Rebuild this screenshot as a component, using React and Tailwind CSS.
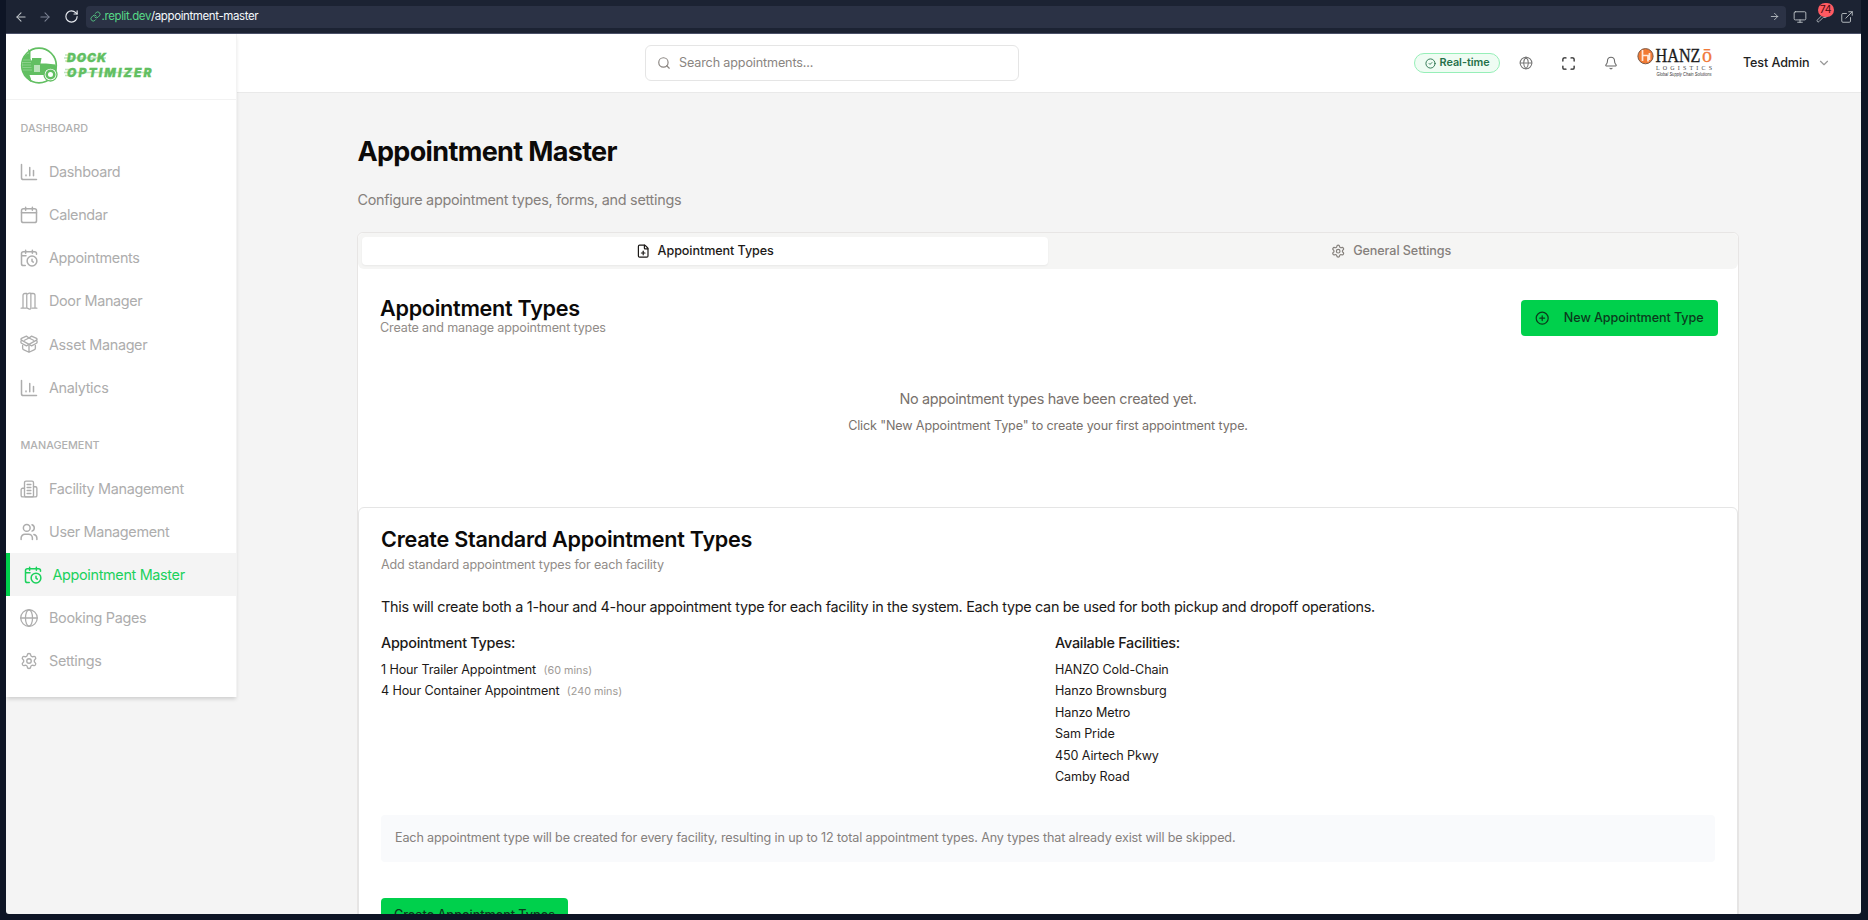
import React from "react";
import {
  ArrowLeft, ArrowRight, RotateCw, Link, Monitor, Wrench, ExternalLink, Search, CircleCheck, Globe, Maximize, Bell,
  ChevronDown, FilePlus, Settings, CirclePlus,
} from "lucide-react";

const stroke = { fill: "none", stroke: "currentColor", strokeWidth: 2, strokeLinecap: "round", strokeLinejoin: "round" };

function Icon({ children, className = "size-[18px]" }) {
  return (
    <svg viewBox="0 0 24 24" className={"shrink-0 " + className} {...stroke}>{children}</svg>
  );
}

const icons = {
  chart: (
    <g><path d="M2 2v17.500a2.500 2.500 0 0 0 2.500 2.500H22" /><path d="M8 17v-1M13 17V6M18 17v-7" /></g>
  ),
  calendar: (
    <g><rect x="2" y="3.500" width="20" height="18.500" rx="2.500" /><path d="M2 9h20M7.500 1.500v4M16.500 1.500v4" /></g>
  ),
  calendarClock: (
    <g><path d="M22 7V6a2.500 2.500 0 0 0-2.500-2.500h-15A2.500 2.500 0 0 0 2 6v13.500A2.500 2.500 0 0 0 4.500 22H7M2 9h6M7.500 1.500v4M16.500 1.500v4" /><circle cx="16" cy="16" r="6.500" /><path d="M16 13.500v2.700l1.700 1.300" /></g>
  ),
  door: (
    <g strokeWidth="1.700"><path d="M1.500 21.500H8M16 21.500h6.500M4 21V4.500A2.500 2.500 0 0 1 6.500 2H9M20 21V4.500A2.500 2.500 0 0 0 17.500 2H14" /><path d="M14.500 21.500V3a1.500 1.500 0 0 0-2-1.500l-2.500 1A1.500 1.500 0 0 0 9 4v17.200l3.500 1.600a1.400 1.400 0 0 0 2-1.300z" /></g>
  ),
  box: (
    <g strokeWidth="1.800"><path d="M12 14v9M3.500 14v3.500c0 1.500 1 2 2.500 2.800l6 2.700 6-2.700c1.500-.8 2.500-1.300 2.500-2.800V14" /><path d="M12 4L8.500 1.500 2 4.500c-1 .7-1 1.700 0 2.300L12 12.500l10-5.700c1-.6 1-1.600 0-2.300l-6.500-3z" /><path d="M2 7c-1 1.500-1 3 0 4l6.500 3.500 3.500-2 3.500 2L22 11c1-1 1-2.500 0-4M6 7l6-3 6 3" /></g>
  ),
  building: (
    <g strokeWidth="1.800"><rect x="6" y="1.500" width="12" height="21" rx="2" /><path d="M6 11H3.500A2 2 0 0 0 1.500 13v7.500a2 2 0 0 0 2 2h17a2 2 0 0 0 2-2V11a2 2 0 0 0-2-2H18M9.500 6h5M9.500 10h5M9.500 14h5M9.500 18h5" /></g>
  ),
  users: (
    <g><circle cx="9" cy="6.500" r="4.500" /><path d="M1.500 22v-2a5 5 0 0 1 5-5h5a5 5 0 0 1 5 5v2M16 2.300a4.500 4.500 0 0 1 0 8.500M22.500 22v-2a5 5 0 0 0-4-4.800" /></g>
  ),
  globe: (
    <g strokeWidth="1.700"><circle cx="12" cy="12" r="11" /><ellipse cx="12" cy="12" rx="4.700" ry="11" /><path d="M1 12h22" /></g>
  ),
};

const dashboardItems = [
  ["chart", "Dashboard"], ["calendar", "Calendar"], ["calendarClock", "Appointments"],
  ["door", "Door Manager"], ["box", "Asset Manager"], ["chart", "Analytics"],
];
const managementItems = [
  ["building", "Facility Management"], ["users", "User Management"], ["calendarClock", "Appointment Master"],
  ["globe", "Booking Pages"], ["settings", "Settings"],
];

function NavItem({ icon, label, active }) {
  return (
    <a className={"flex h-[43.200px] items-center gap-[11px] text-[14.400px] tracking-[-0.330px] " + (active ? "border-l-4 border-[#00d04c] bg-[#f4f4f4] pl-[13.500px] text-[#1bd15c]" : "pl-[14px] text-[#adadad]")}>
      {icon === "settings" ? <Settings className="size-[18px]" strokeWidth={1.800} /> : <Icon>{icons[icon]}</Icon>}
      <span>{label}</span>
    </a>
  );
}

function BrowserBar() {
  return (
    <div className="flex h-[34px] shrink-0 items-center border-b border-[#4a5068] bg-[#1c2333] pl-[7.500px] pr-[7px] text-[#c2c8cc]">
      <ArrowLeft className="size-[14px]" strokeWidth={1.800} />
      <ArrowRight className="ml-[10.500px] size-[14px] text-[#7d8495]" strokeWidth={1.800} />
      <RotateCw className="ml-[12px] size-[15px] text-[#e8ebf0]" strokeWidth={1.800} />
      <div className="ml-[6.500px] flex h-[22px] flex-1 items-center rounded bg-[#2b3245] pl-[4px] text-[11.500px] tracking-[-0.390px]">
        <Link className="size-[11px] text-[#5bd68a]" strokeWidth={1.800} />
        <span className="ml-px text-[#57d987]">.replit.dev</span>
        <span className="text-[#f5f9fc]">/appointment-master</span>
        <ArrowRight className="ml-auto mr-[6px] size-[11px]" strokeWidth={1.800} />
      </div>
      <Monitor className="ml-[7px] size-[14px]" strokeWidth={1.500} />
      <div className="relative ml-[9.500px]">
        <Wrench className="size-[13px]" strokeWidth={1.500} />
        <span className="absolute -top-[7px] left-[1.500px] flex h-[14px] w-[16px] items-center justify-center rounded-full bg-[#ff5a62] text-[10.500px] tracking-[-0.300px] text-[#4a0b10]">74</span>
      </div>
      <ExternalLink className="ml-[11px] size-[14px]" strokeWidth={1.500} />
    </div>
  );
}

function DockLogo() {
  return (
    <svg width="140" height="38" viewBox="0 0 140 38" className="overflow-visible text-[#62bf62]">
      <circle cx="19" cy="18.500" r="17.300" fill="none" stroke="currentColor" strokeWidth="1.700" />
      <path d="M3 11l4-4 2-1L8 2l2.500 2v8L12 14v14H9.500L11 32v3L6 30 2 23z" fill="currentColor" />
      <path d="M12 11h9.500l-1 5.500H26l9.500 1 1 4v2.500h-1.500a6.500 6.500 0 0 0-10.500 4H12z" fill="currentColor" />
      <path d="M14 18h6v7h-6z" fill="#b9e3b9" />
      <path d="M3 13h8M2 15.500h9M2 18h9M2.500 20.500h9M3 23h9" stroke="#a6dba6" strokeWidth=".6" />
      <circle cx="30.500" cy="27.500" r="6.500" fill="#fff" stroke="currentColor" strokeWidth="1.300" />
      <circle cx="30.500" cy="27.500" r="3.800" fill="none" stroke="currentColor" strokeWidth="2.600" />
      <g stroke="currentColor" opacity=".4" strokeWidth="1.300"><path d="M45 8h5M44 11h42M45 14h4M45 22.500h5M44 25.500h86M45 28.500h4" /></g>
      <g fill="currentColor" stroke="currentColor" strokeWidth=".3" fontFamily="Inter, sans-serif" fontWeight="900" fontStyle="italic" fontSize="12">
        <text x="47" y="15.300" textLength="39">DOCK</text>
        <text x="47" y="29.800" textLength="84.500">OPTIMIZER</text>
      </g>
    </svg>
  );
}

function HanzoLogo() {
  return (
    <svg width="78" height="32" viewBox="0 0 78 32" className="overflow-visible">
      <circle cx="8.500" cy="9.200" r="7.600" fill="#f27a33" stroke="#7a5a48" strokeWidth="1" />
      <path d="M5.500 3v11M5.500 8.500h5.500v6M12.500 6v7" stroke="#ffe9dc" strokeWidth="1.700" fill="none" />
      <g fontFamily="Liberation Serif, serif" fill="#1c1c1c">
        <text x="18.500" y="15" fontSize="19" textLength="45" lengthAdjust="spacingAndGlyphs" stroke="#1c1c1c" strokeWidth=".3">HANZ</text>
        <text x="65" y="15" fontSize="20" fill="#f0793a" stroke="#f0793a" strokeWidth=".3">ō</text>
        <text x="19" y="22.800" fontSize="6" textLength="56" fill="#444">LOGISTICS</text>
        <text x="19.500" y="28.800" fontFamily="Liberation Sans, sans-serif" fontStyle="italic" fontSize="4.500" textLength="55" lengthAdjust="spacingAndGlyphs" fill="#333">Global Supply Chain Solutions</text>
      </g>
    </svg>
  );
}

function Sidebar() {
  return (
    <aside className="relative flex h-[663px] w-[231px] shrink-0 flex-col border-r border-[#f3f3f3] bg-white shadow-[0_3px_4px_-1px_rgba(0,0,0,0.16)]">
      <div className="flex h-[66px] shrink-0 items-start border-b border-[#f2f2f2] pl-[13.500px] pt-[13px]"><DockLogo /></div>
      <h2 className="mt-[20px] h-[18px] pl-[14.500px] text-[10.800px] leading-[18px] font-medium text-[#b0b0b0]">DASHBOARD</h2>
      <nav className="mt-[12px]">{dashboardItems.map(([i, l]) => <NavItem key={l} icon={i} label={l} />)}</nav>
      <h2 className="mt-[27.800px] h-[18px] pl-[14.500px] text-[10.800px] leading-[18px] font-medium text-[#b0b0b0]">MANAGEMENT</h2>
      <nav className="mt-[12px]">{managementItems.map(([i, l]) => <NavItem key={l} icon={i} label={l} active={l === "Appointment Master"} />)}</nav>
    </aside>
  );
}

function TopBar() {
  return (
    <header className="flex h-[59px] shrink-0 items-center border-b border-[#e9e9e9] bg-white pl-[408px] pr-[30.500px]">
      <div className="flex h-[36px] w-[374px] items-center gap-[8px] rounded-md border border-[#e5e5e5] px-[11px] text-[12.600px] tracking-[-0.140px] text-[#8a8581]">
        <Search className="size-[14px]" /> Search appointments...
      </div>
      <div className="ml-auto flex items-center">
        <div className="flex h-[20px] w-[86.500px] items-center justify-center gap-1 rounded-full border border-[#96efb8] bg-[#effcf3] text-[10.800px] font-semibold text-[#25704a]">
          <CircleCheck className="size-[11px]" /> Real-time
        </div>
        <Globe className="ml-[18.500px] size-[14px] text-[#777]" strokeWidth={1.800} />
        <Maximize className="ml-[28px] size-[15px] text-[#222]" strokeWidth={2} />
        <Bell className="ml-[28.500px] size-[14px] text-[#666]" strokeWidth={1.800} />
        <div className="ml-[18.500px]"><HanzoLogo /></div>
        <span className="ml-[28px] text-[12.600px] font-medium tracking-[-0.100px] text-[#222]">Test Admin</span>
        <ChevronDown className="ml-[7px] size-[14px] text-[#999]" />
      </div>
    </header>
  );
}

const facilities = ["HANZO Cold-Chain", "Hanzo Brownsburg", "Hanzo Metro", "Sam Pride", "450 Airtech Pkwy", "Camby Road"];

export default function App() {
  return (
    <div className="flex h-[920px] w-[1868px] flex-col overflow-hidden bg-[#0e1525] font-['Inter',sans-serif]">
      <div className="ml-[6px] mr-[7px] flex h-[914px] flex-col overflow-hidden rounded-b-[3px]">
        <BrowserBar />
        <div className="flex min-h-0 flex-1 bg-[#f4f4f4]">
          <Sidebar />
          <div className="flex min-w-0 flex-1 flex-col">
            <TopBar />
            <main className="flex-1 overflow-hidden pl-[120px] pr-[122px] pt-[43px]">
              <h1 className="pl-[0.500px] text-[27px] leading-[32px] font-bold tracking-[-0.660px] text-[#0c0a09]">Appointment Master</h1>
              <p className="mt-[21px] pl-[0.500px] text-[14.400px] leading-[22px] tracking-[-0.280px] text-[#85807c]">Configure appointment types, forms, and settings</p>
              <section className="mt-[21px] h-[800px] rounded-t-md border border-[#e7e5e4] bg-white">
                <div className="flex h-[36px] rounded-md bg-[#f5f5f4] p-[4px] text-[12.600px] font-medium tracking-[-0.080px]">
                  <div className="flex flex-1 items-center justify-center gap-[7.500px] rounded bg-white text-[#1c1917] shadow-[0_1px_2px_rgba(0,0,0,0.05)]"><FilePlus className="size-[14.400px]" />Appointment Types</div>
                  <div className="flex flex-1 items-center justify-center gap-[7.500px] pl-px text-[#85807c]"><Settings className="size-[14.400px]" />General Settings</div>
                </div>
                <div className="flex items-start justify-between pl-[22px] pr-[20.500px] pt-[27px]">
                  <div>
                    <h2 className="text-[21.600px] leading-[24px] font-semibold tracking-[-0.270px] text-[#0c0a09]">Appointment Types</h2>
                    <p className="mt-px text-[12.600px] leading-[14px] tracking-[-0.160px] text-[#918c88]">Create and manage appointment types</p>
                  </div>
                  <button className="mt-[4px] flex h-[36px] w-[197px] items-center justify-center gap-[14px] rounded bg-[#00d04c] pl-px text-[12.600px] font-medium tracking-[-0.080px] text-[#0b3a1c]"><CirclePlus className="size-[14.400px]" />New Appointment Type</button>
                </div>
                <div className="mt-[52px] h-[119px] text-center text-[#78716c]">
                  <p className="text-[14.400px] leading-[22px] tracking-[-0.310px]">No appointment types have been created yet.</p>
                  <p className="mt-[7px] text-[12.600px] leading-[18px] tracking-[-0.140px]">Click "New Appointment Type" to create your first appointment type.</p>
                </div>
                <div className="rounded-t-md border border-[#e5e5e5] bg-white px-[22px] pt-[19px] text-[#1c1917]">
                  <h2 className="text-[21.600px] leading-[24px] font-semibold tracking-[-0.260px] text-[#0c0a09]">Create Standard Appointment Types</h2>
                  <p className="mt-[5px] text-[12.600px] leading-[18px] tracking-[-0.160px] text-[#918c88]">Add standard appointment types for each facility</p>
                  <p className="mt-[22px] text-[14.400px] leading-[22px] tracking-[-0.300px]">This will create both a 1-hour and 4-hour appointment type for each facility in the system. Each type can be used for both pickup and dropoff operations.</p>
                  <div className="mt-[14px] grid grid-cols-2 gap-[14px] text-[12.600px] tracking-[-0.130px]">
                    <div>
                      <h3 className="text-[14.400px] leading-[22px] font-medium tracking-[-0.260px]">Appointment Types:</h3>
                      <ul className="mt-[5px] leading-[21.450px]">
                        <li>1 Hour Trailer Appointment <span className="ml-[4px] text-[10.800px] leading-none tracking-normal text-[#a09b97]">(60 mins)</span></li>
                        <li>4 Hour Container Appointment <span className="ml-[4px] text-[10.800px] leading-none tracking-normal text-[#a09b97]">(240 mins)</span></li>
                      </ul>
                    </div>
                    <div>
                      <h3 className="text-[14.400px] leading-[22px] font-medium tracking-[-0.260px]">Available Facilities:</h3>
                      <ul className="mt-[5px] leading-[21.450px]">{facilities.map((f) => <li key={f}>{f}</li>)}</ul>
                    </div>
                  </div>
                  <div className="mt-[27.300px] flex h-[46.500px] items-center rounded bg-[#f9fafc] px-[14px] text-[12.600px] tracking-[-0.145px] text-[#85807c]">Each appointment type will be created for every facility, resulting in up to 12 total appointment types. Any types that already exist will be skipped.</div>
                  <button className="mt-[36.200px] h-[36px] w-[187px] rounded bg-[#00d04c] text-[12.600px] font-medium text-[#0b3a1c]">Create Appointment Types</button>
                </div>
              </section>
            </main>
          </div>
        </div>
      </div>
    </div>
  );
}
